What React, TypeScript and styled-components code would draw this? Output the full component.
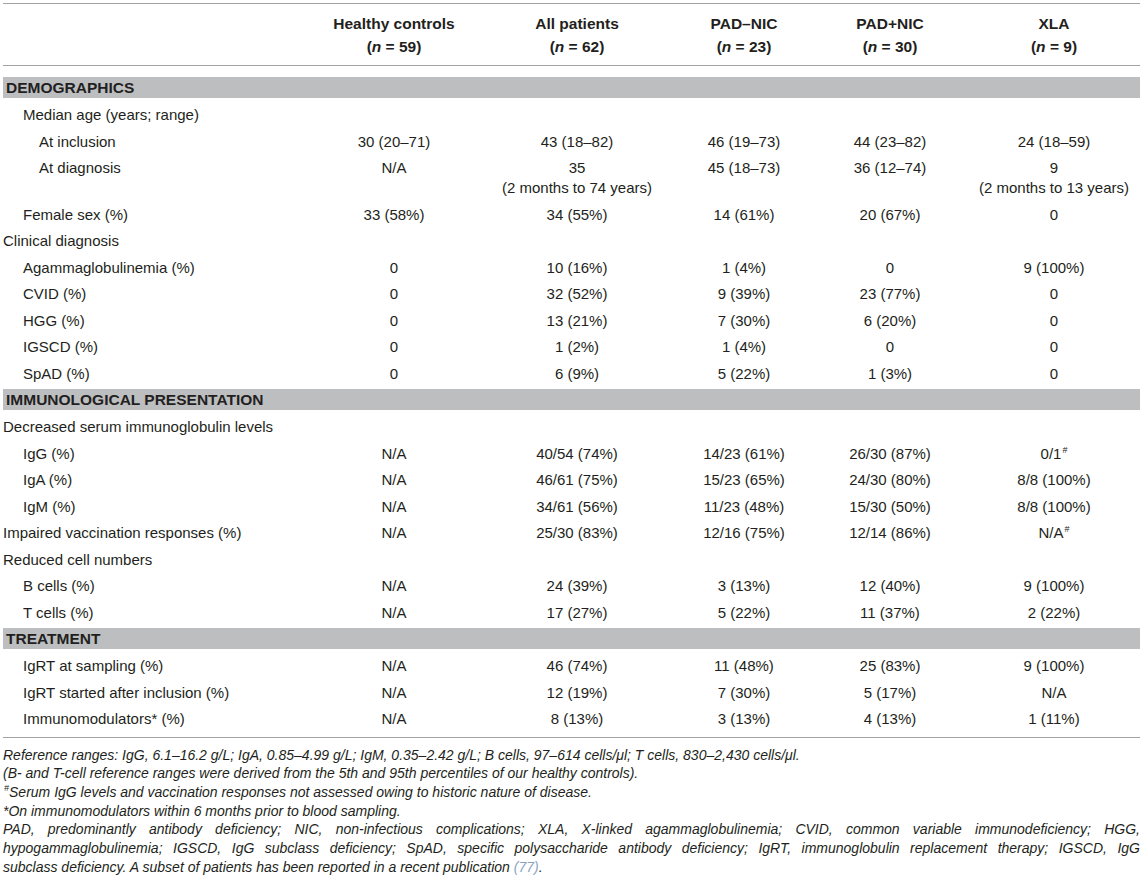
import React from "react";
import styled, { createGlobalStyle } from "styled-components";

const GlobalStyle = createGlobalStyle`
  html, body {
    margin: 0;
    padding: 0;
    background: #ffffff;
  }
  body {
    font-family: "Liberation Sans", Arial, Helvetica, sans-serif;
    color: #231f20;
  }
`;

const COLS = "307px 168px 198px 136px 156px 172px";

const Page = styled.div`
  width: 1137px;
  padding: 3px 3px 0 3px;
`;

const HeaderRow = styled.div`
  display: grid;
  grid-template-columns: ${COLS};
  border-top: 1px solid #a3a3a3;
  border-bottom: 1px solid #a3a3a3;
  padding: 8px 0 7px;
`;

const HeadCell = styled.div`
  text-align: center;
  font-weight: bold;
  font-size: 15.5px;
  line-height: 23px;
`;

const Section = styled.div<{ $first?: boolean }>`
  margin-top: ${(p) => (p.$first ? "11px" : "2px")};
  margin-bottom: 4px;
  height: 21px;
  line-height: 21px;
  background: #bcbec0;
  padding-left: 3px;
  font-weight: bold;
  font-size: 15.5px;
`;

const Row = styled.div`
  display: grid;
  grid-template-columns: ${COLS};
  align-items: start;
  padding: 3.25px 0;
  font-size: 15px;
  line-height: 20px;
`;

const Label = styled.div<{ $indent: number }>`
  padding-left: ${(p) => [0, 20, 36][p.$indent]}px;
  white-space: nowrap;
`;

const Cell = styled.div`
  text-align: center;
  white-space: nowrap;
`;

const Sup = styled.sup`
  font-size: 9px;
  line-height: 0;
  vertical-align: 6px;
  margin-left: 1px;
`;

const BottomRule = styled.div`
  margin-top: 4px;
  border-top: 1px solid #a3a3a3;
`;

const Notes = styled.div`
  padding-top: 8px;
  font-style: italic;
  font-size: 14px;
  line-height: 18.7px;
`;

const Note = styled.div`
  white-space: nowrap;
`;

const JustLine = styled.div`
  text-align: justify;
  text-align-last: justify;
`;

const Ref = styled.span`
  color: #8aa3c4;
`;

type Item =
  | { kind: "section"; title: string }
  | { kind: "row"; label: React.ReactNode; indent: number; values?: React.ReactNode[] };

const hash = <Sup>#</Sup>;

const items: Item[] = [
  { kind: "section", title: "DEMOGRAPHICS" },
  { kind: "row", label: "Median age (years; range)", indent: 1 },
  { kind: "row", label: "At inclusion", indent: 2, values: ["30 (20–71)", "43 (18–82)", "46 (19–73)", "44 (23–82)", "24 (18–59)"] },
  {
    kind: "row",
    label: "At diagnosis",
    indent: 2,
    values: [
      "N/A",
      <>35<br />(2 months to 74 years)</>,
      "45 (18–73)",
      "36 (12–74)",
      <>9<br />(2 months to 13 years)</>,
    ],
  },
  { kind: "row", label: "Female sex (%)", indent: 1, values: ["33 (58%)", "34 (55%)", "14 (61%)", "20 (67%)", "0"] },
  { kind: "row", label: "Clinical diagnosis", indent: 0 },
  { kind: "row", label: "Agammaglobulinemia (%)", indent: 1, values: ["0", "10 (16%)", "1 (4%)", "0", "9 (100%)"] },
  { kind: "row", label: "CVID (%)", indent: 1, values: ["0", "32 (52%)", "9 (39%)", "23 (77%)", "0"] },
  { kind: "row", label: "HGG (%)", indent: 1, values: ["0", "13 (21%)", "7 (30%)", "6 (20%)", "0"] },
  { kind: "row", label: "IGSCD (%)", indent: 1, values: ["0", "1 (2%)", "1 (4%)", "0", "0"] },
  { kind: "row", label: "SpAD (%)", indent: 1, values: ["0", "6 (9%)", "5 (22%)", "1 (3%)", "0"] },
  { kind: "section", title: "IMMUNOLOGICAL PRESENTATION" },
  { kind: "row", label: "Decreased serum immunoglobulin levels", indent: 0 },
  { kind: "row", label: "IgG (%)", indent: 1, values: ["N/A", "40/54 (74%)", "14/23 (61%)", "26/30 (87%)", <>0/1{hash}</>] },
  { kind: "row", label: "IgA (%)", indent: 1, values: ["N/A", "46/61 (75%)", "15/23 (65%)", "24/30 (80%)", "8/8 (100%)"] },
  { kind: "row", label: "IgM (%)", indent: 1, values: ["N/A", "34/61 (56%)", "11/23 (48%)", "15/30 (50%)", "8/8 (100%)"] },
  { kind: "row", label: "Impaired vaccination responses (%)", indent: 0, values: ["N/A", "25/30 (83%)", "12/16 (75%)", "12/14 (86%)", <>N/A{hash}</>] },
  { kind: "row", label: "Reduced cell numbers", indent: 0 },
  { kind: "row", label: "B cells (%)", indent: 1, values: ["N/A", "24 (39%)", "3 (13%)", "12 (40%)", "9 (100%)"] },
  { kind: "row", label: "T cells (%)", indent: 1, values: ["N/A", "17 (27%)", "5 (22%)", "11 (37%)", "2 (22%)"] },
  { kind: "section", title: "TREATMENT" },
  { kind: "row", label: "IgRT at sampling (%)", indent: 1, values: ["N/A", "46 (74%)", "11 (48%)", "25 (83%)", "9 (100%)"] },
  { kind: "row", label: "IgRT started after inclusion (%)", indent: 1, values: ["N/A", "12 (19%)", "7 (30%)", "5 (17%)", "N/A"] },
  { kind: "row", label: "Immunomodulators* (%)", indent: 1, values: ["N/A", "8 (13%)", "3 (13%)", "4 (13%)", "1 (11%)"] },
];

const headers: [string, string][] = [
  ["Healthy controls", "59"],
  ["All patients", "62"],
  ["PAD–NIC", "23"],
  ["PAD+NIC", "30"],
  ["XLA", "9"],
];

export default function App() {
  let sectionCount = 0;
  return (
    <Page>
      <GlobalStyle />
      <HeaderRow>
        <HeadCell />
        {headers.map(([t, n]) => (
          <HeadCell key={t}>
            {t}
            <br />(<i>n</i> = {n})
          </HeadCell>
        ))}
      </HeaderRow>
      {items.map((it, i) => {
        if (it.kind === "section") {
          const first = sectionCount === 0;
          sectionCount++;
          return (
            <Section key={i} $first={first}>
              {it.title}
            </Section>
          );
        }
        const vals = it.values ?? ["", "", "", "", ""];
        return (
          <Row key={i}>
            <Label $indent={it.indent}>{it.label}</Label>
            {vals.map((v, j) => (
              <Cell key={j}>{v}</Cell>
            ))}
          </Row>
        );
      })}
      <BottomRule />
      <Notes>
        <Note>
          Reference ranges: IgG, 6.1–16.2 g/L; IgA, 0.85–4.99 g/L; IgM, 0.35–2.42 g/L; B cells, 97–614 cells/μl; T
          cells, 830–2,430 cells/μl.
        </Note>
        <Note>(B- and T-cell reference ranges were derived from the 5th and 95th percentiles of our healthy controls).</Note>
        <Note>
          <Sup>#</Sup>Serum IgG levels and vaccination responses not assessed owing to historic nature of disease.
        </Note>
        <Note>*On immunomodulators within 6 months prior to blood sampling.</Note>
        <JustLine>
          PAD, predominantly antibody deficiency; NIC, non-infectious complications; XLA, X-linked agammaglobulinemia;
          CVID, common variable immunodeficiency; HGG,
        </JustLine>
        <JustLine>
          hypogammaglobulinemia; IGSCD, IgG subclass deficiency; SpAD, specific polysaccharide antibody deficiency;
          IgRT, immunoglobulin replacement therapy; IGSCD, IgG
        </JustLine>
        <Note>
          subclass deficiency. A subset of patients has been reported in a recent publication <Ref>(77)</Ref>.
        </Note>
      </Notes>
    </Page>
  );
}
